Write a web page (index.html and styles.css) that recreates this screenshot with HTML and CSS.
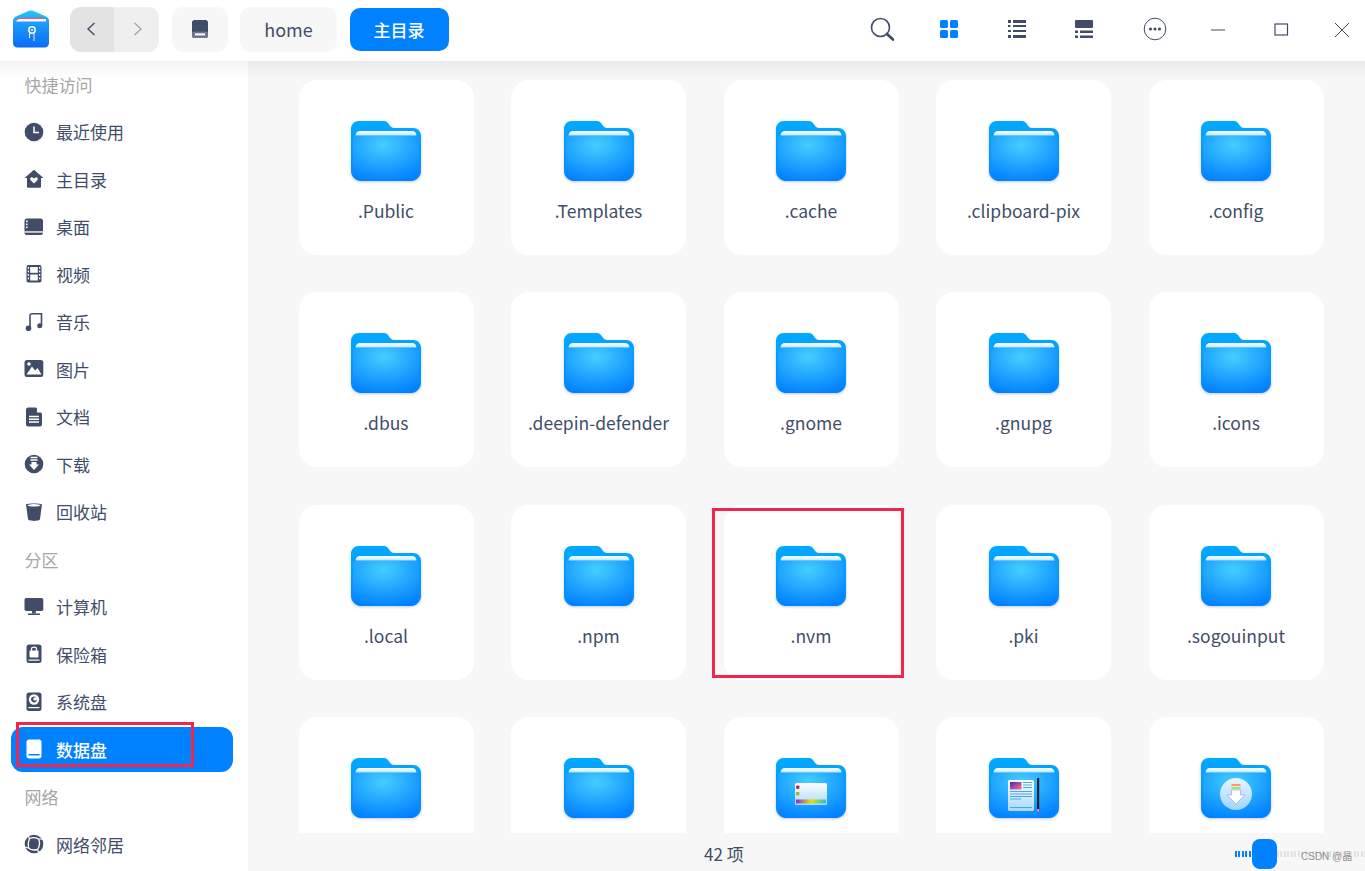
FILE: index.html
```html
<!DOCTYPE html>
<html lang="zh-CN">
<head>
<meta charset="utf-8">
<title>文件管理器</title>
<link rel="stylesheet" href="styles.css">
</head>
<body>
<svg class="defs" aria-hidden="true">
  <defs>
    <radialGradient id="front" cx="0.46" cy="0.2" r="0.85">
      <stop offset="0" stop-color="#45ceff"/>
      <stop offset="0.6" stop-color="#1a9fff"/>
      <stop offset="1" stop-color="#0080ff"/>
    </radialGradient>
    <linearGradient id="back" x1="0" y1="0" x2="0" y2="1">
      <stop offset="0" stop-color="#00aaff"/>
      <stop offset="1" stop-color="#0a86ff"/>
    </linearGradient>
    <linearGradient id="strip" x1="0" y1="0" x2="0" y2="1">
      <stop offset="0" stop-color="#ffffff"/>
      <stop offset="1" stop-color="#bfe9ff"/>
    </linearGradient>
    <linearGradient id="logoBody" x1="0" y1="0" x2="0" y2="1">
      <stop offset="0" stop-color="#22c8f5"/>
      <stop offset="0.4" stop-color="#1c97fb"/>
      <stop offset="1" stop-color="#0a6cf5"/>
    </linearGradient>
    <linearGradient id="rainbow" x1="0" y1="0" x2="1" y2="0">
      <stop offset="0" stop-color="#8a2be2"/>
      <stop offset="0.5" stop-color="#e8e000"/>
      <stop offset="1" stop-color="#20c0d8"/>
    </linearGradient>
    <linearGradient id="paper" x1="0" y1="0" x2="0" y2="1">
      <stop offset="0" stop-color="#ffffff"/>
      <stop offset="1" stop-color="#a9d8ff"/>
    </linearGradient>
    <linearGradient id="disc" x1="0" y1="0" x2="0" y2="1">
      <stop offset="0" stop-color="#e6f5ff"/>
      <stop offset="1" stop-color="#9fd4ff"/>
    </linearGradient>
    <linearGradient id="pic" x1="0" y1="0" x2="1" y2="1">
      <stop offset="0" stop-color="#4a1fd0"/>
      <stop offset="1" stop-color="#ff7a70"/>
    </linearGradient>
    <symbol id="folder" viewBox="0 0 70 62">
      <path d="M8 0H32C35.500 0 36.500 1.500 38 3.500C39.500 5.700 40.500 7 43 7H62C66.500 7 70 10.500 70 15V50C70 55.500 65.500 60 60 60H10C4.500 60 0 55.500 0 50V8C0 3.500 3.500 0 8 0Z" fill="url(#back)"/>
      <path d="M2 15H68V50C68 54.500 64.500 60 59 60H11C5.500 60 2 54.500 2 50Z" fill="url(#front)"/>
      <path d="M4.500 14.500C4.500 11.800 6.500 10 9 10H61C63.500 10 65.500 11.800 65.500 14.500Z" fill="url(#strip)"/>
    </symbol>
  </defs>
</svg>

<header class="titlebar">
  <div class="tb-left">
    <svg class="logo" viewBox="0 0 36 38">
      <path d="M16 .8Q18 0 20 .8L33 6.500Q36 8 36 11V33C36 35.500 34 37.500 31.500 37.500H4.500C2 37.500 0 35.500 0 33V11Q0 8 3 6.500Z" fill="url(#logoBody)"/>
      <path d="M3 11.500Q3 8.500 6 8L30 7.600V9H6Z" fill="#ff4d6a"/>
      <path d="M3 11.500Q4 9 6.500 9H33V11.500Z" fill="#f3fbff"/>
      <circle cx="19" cy="20" r="3.200" fill="none" stroke="#fff" stroke-width="1.500"/>
      <circle cx="19" cy="20" r=".9" fill="#fff"/>
      <path d="M21 23V31" stroke="#dff2ff" stroke-width="1"/>
      <path d="M16.500 23V28" stroke="#dff2ff" stroke-width="1"/>
    </svg>
    <div class="nav-group">
      <div class="nav-back">
        <svg class="ic14" viewBox="0 0 14 14"><path d="M9.500 1L3 7L9.500 13" fill="none" stroke="#414d68" stroke-width="1.400"/></svg>
      </div>
      <div class="nav-fwd">
        <svg class="ic14" viewBox="0 0 14 14"><path d="M4.500 1L11 7L4.500 13" fill="none" stroke="#a4a8b4" stroke-width="1.400"/></svg>
      </div>
    </div>
    <div class="crumb crumb-disk">
      <svg class="ic18" viewBox="0 0 16 18">
        <path d="M2.500 0H13.500C14.900 0 16 1.100 16 2.500V15.500C16 16.900 14.900 18 13.500 18H2.500C1.100 18 0 16.900 0 15.500V2.500C0 1.100 1.100 0 2.500 0Z" fill="#414d68"/>
        <rect y="11.500" width="16" height="6.500" rx="2" fill="#6e7890"/>
        <rect x="3" y="13.400" width="10" height="2" fill="#fff"/>
      </svg>
    </div>
    <div class="crumb crumb-home">home</div>
    <div class="crumb-current">主目录</div>
  </div>
  <div class="tb-right">
    <svg class="tool" viewBox="0 0 24 24"><circle cx="10.500" cy="10.500" r="9" fill="none" stroke="#414d68" stroke-width="1.600"/><path d="M17 17L23 22.500" stroke="#414d68" stroke-width="2.800" stroke-linecap="round"/></svg>
    <svg class="tool" viewBox="0 0 24 24"><rect x="3" y="3" width="8" height="8" rx="1.500" fill="#0081ff"/><rect x="13" y="3" width="8" height="8" rx="1.500" fill="#0081ff"/><rect x="3" y="13" width="8" height="8" rx="1.500" fill="#0081ff"/><rect x="13" y="13" width="8" height="8" rx="1.500" fill="#0081ff"/></svg>
    <svg class="tool" viewBox="0 0 24 24" fill="#414d68"><rect x="3" y="3" width="3" height="3"/><rect x="8" y="3" width="13" height="3"/><rect x="3" y="8" width="2.500" height="2"/><rect x="8" y="8" width="13" height="2"/><rect x="3" y="13" width="3" height="2"/><rect x="8" y="13" width="13" height="2"/><rect x="3" y="18" width="3" height="3"/><rect x="8" y="18" width="13" height="3"/></svg>
    <svg class="tool" viewBox="0 0 24 24" fill="#414d68"><rect x="3" y="3" width="18" height="8" rx="1"/><rect x="3" y="13.500" width="3" height="2.500"/><rect x="8" y="13.500" width="13" height="2.500"/><rect x="3" y="18.500" width="3" height="2.500"/><rect x="8" y="18.500" width="13" height="2.500"/></svg>
    <svg class="tool" viewBox="0 0 24 24"><circle cx="12" cy="12" r="10.800" fill="none" stroke="#414d68" stroke-width="1"/><circle cx="7.500" cy="12" r="1.600" fill="#414d68"/><circle cx="12" cy="12" r="1.600" fill="#414d68"/><circle cx="16.500" cy="12" r="1.600" fill="#414d68"/></svg>
    <svg class="tool" viewBox="0 0 24 24"><path d="M5 13H19" stroke="#414d68" stroke-width="1"/></svg>
    <svg class="tool" viewBox="0 0 24 24"><rect x="6" y="7" width="12.500" height="11" fill="none" stroke="#414d68" stroke-width="1.200"/></svg>
    <svg class="tool" viewBox="0 0 24 24"><path d="M5 6L19 20M19 6L5 20" stroke="#414d68" stroke-width="1"/></svg>
  </div>
</header>

<div class="body-row">
  <nav class="sidebar">
    <div class="side-label">快捷访问</div>
    <div class="side-row"><svg class="side-ic" viewBox="0 0 20 20"><circle cx="10" cy="10" r="9.300"/><path d="M10 4.500V10.500H15" fill="none" stroke="#fff" stroke-width="1.500"/></svg><span>最近使用</span></div>
    <div class="side-row"><svg class="side-ic" viewBox="0 0 20 20"><path d="M10 .7L19.500 9H17V17.500C17 18.300 16.500 18.800 15.700 18.800H4.300C3.500 18.800 3 18.300 3 17.500V9H.5Z"/><path d="M10 14.500L6.500 11C5.500 9.800 6.800 7.800 8.500 8.500L10 9.500L11.500 8.500C13.200 7.800 14.500 9.800 13.500 11Z" fill="#fff"/></svg><span>主目录</span></div>
    <div class="side-row"><svg class="side-ic" viewBox="0 0 20 20"><rect x=".5" y="1.500" width="18.500" height="16.500" rx="2.500"/><rect x=".5" y="14.300" width="18.500" height="1.300" fill="#fff"/><rect x="2" y="3.500" width="1.600" height="1.600" fill="#fff"/><rect x="2" y="6.500" width="1.600" height="1.600" fill="#fff"/><rect x="2" y="9.500" width="1.600" height="1.600" fill="#fff"/></svg><span>桌面</span></div>
    <div class="side-row"><svg class="side-ic" viewBox="0 0 20 20"><rect x="2.500" y="1" width="15" height="17.500" rx="2"/><rect x="6.200" y="3" width="7.600" height="5.800" fill="#fff"/><rect x="6.200" y="10.500" width="7.600" height="6" fill="#fff"/><g fill="#fff"><rect x="3.700" y="3" width="1.300" height="1.800"/><rect x="3.700" y="6.500" width="1.300" height="1.800"/><rect x="3.700" y="10" width="1.300" height="1.800"/><rect x="3.700" y="13.500" width="1.300" height="1.800"/><rect x="15" y="3" width="1.300" height="1.800"/><rect x="15" y="6.500" width="1.300" height="1.800"/><rect x="15" y="10" width="1.300" height="1.800"/><rect x="15" y="13.500" width="1.300" height="1.800"/></g></svg><span>视频</span></div>
    <div class="side-row"><svg class="side-ic" viewBox="0 0 20 20"><path d="M6 16.500V3.500C6 2.500 6.600 1.800 7.600 1.800H17.500V14" fill="none" stroke="#414d68" stroke-width="1.600"/><circle cx="4.500" cy="16.300" r="2.800"/><circle cx="15.700" cy="13.800" r="2.500"/></svg><span>音乐</span></div>
    <div class="side-row"><svg class="side-ic" viewBox="0 0 20 20"><rect x=".5" y="1" width="18.800" height="17" rx="2.500"/><path d="M2.500 15.500L8 7.500L11 11.500L13.500 9L17.500 15.500Z" fill="#fff"/><circle cx="5" cy="5" r="1.800" fill="#fff"/></svg><span>图片</span></div>
    <div class="side-row"><svg class="side-ic" viewBox="0 0 20 20"><path d="M4 .5H12L18 6.500V17.500C18 18.800 17 19.500 16 19.500H4C3 19.500 2 18.800 2 17.500V2.500C2 1.200 3 .5 4 .5Z"/><path d="M13 .5L18 5.500H13Z" fill="#fff"/><path d="M5 9.500H15M5 12.300H15M5 15H15" stroke="#fff" stroke-width="1.400"/></svg><span>文档</span></div>
    <div class="side-row"><svg class="side-ic" viewBox="0 0 20 20"><circle cx="10" cy="10" r="9.300"/><path d="M6.500 3.500H13.500M6.500 6H13.500" stroke="#fff" stroke-width="1.300"/><path d="M7.500 8H12.500V10.500H15L10 16L5 10.500H7.500Z" fill="#fff"/></svg><span>下载</span></div>
    <div class="side-row"><svg class="side-ic" viewBox="0 0 20 20"><path d="M2 2.500C2 1 18 1 18 2.500L16 17C15.800 19.500 4.200 19.500 4 17Z"/><ellipse cx="10" cy="3.300" rx="6.500" ry="1.200" fill="#fff"/></svg><span>回收站</span></div>
    <div class="side-label">分区</div>
    <div class="side-row"><svg class="side-ic" viewBox="0 0 20 20"><rect x=".5" y="1" width="18.800" height="13" rx="1.800"/><rect x="8" y="14" width="3.800" height="2.500"/><rect x="4" y="16.500" width="12" height="1.500"/></svg><span>计算机</span></div>
    <div class="side-row"><svg class="side-ic" viewBox="0 0 20 20"><rect x="2.500" y=".5" width="15" height="18.500" rx="2.500"/><rect x="5.500" y="6.500" width="9" height="7" rx="1" fill="#fff"/><path d="M7.500 7V5C7.500 2.500 12.500 2.500 12.500 5V7" fill="none" stroke="#fff" stroke-width="1.200"/><rect x="4.500" y="15.500" width="11" height="1.200" fill="#fff"/></svg><span>保险箱</span></div>
    <div class="side-row"><svg class="side-ic" viewBox="0 0 20 20"><rect x="2.500" y=".5" width="15" height="18.500" rx="2.500"/><circle cx="10" cy="7.500" r="5.200" fill="#fff"/><path d="M7 7C7 4.500 11 3.700 12.500 5.500C10.500 5 9 6 9.500 7.500C10 9 12 9 13 7.500C13 10 10.500 11 9 10.200C7.800 9.500 7 8.500 7 7Z"/><rect x="4.500" y="15" width="11" height="1.200" fill="#fff"/></svg><span>系统盘</span></div>
    <div class="side-row side-active"><svg class="side-ic side-ic-white" viewBox="0 0 20 20"><path d="M5 .5H15C16.400 .5 17.500 1.600 17.500 3V17C17.500 18.400 16.400 19.500 15 19.500H5C3.600 19.500 2.500 18.400 2.500 17V3C2.500 1.600 3.600 .5 5 .5Z"/><rect x="4.500" y="15" width="11" height="1.500" fill="#0081ff"/></svg><span>数据盘</span></div>
    <div class="side-label">网络</div>
    <div class="side-row"><svg class="side-ic" viewBox="0 0 20 20"><circle cx="10" cy="10" r="9.300"/><path d="M5.500 4.500Q10 2.500 14.500 5Q17 10.500 13.500 15.500Q8 17 4.500 14Q3.500 9 5.500 4.500Z" stroke="#fff" stroke-width="1.300"/><path d="M5.500 4.500L4 1.500M14.500 5L18.500 5M13.500 15.500L15 19M4.500 14L.5 13" fill="none" stroke="#fff" stroke-width="1.200"/></svg><span>网络邻居</span></div>
  </nav>

  <div class="right-pane">
    <main class="content">
      <div class="grid">
        <div class="card"><svg class="folder"><use href="#folder"/></svg><div class="name">.Public</div></div>
        <div class="card"><svg class="folder"><use href="#folder"/></svg><div class="name">.Templates</div></div>
        <div class="card"><svg class="folder"><use href="#folder"/></svg><div class="name">.cache</div></div>
        <div class="card"><svg class="folder"><use href="#folder"/></svg><div class="name">.clipboard-pix</div></div>
        <div class="card"><svg class="folder"><use href="#folder"/></svg><div class="name">.config</div></div>
        <div class="card"><svg class="folder"><use href="#folder"/></svg><div class="name">.dbus</div></div>
        <div class="card"><svg class="folder"><use href="#folder"/></svg><div class="name">.deepin-defender</div></div>
        <div class="card"><svg class="folder"><use href="#folder"/></svg><div class="name">.gnome</div></div>
        <div class="card"><svg class="folder"><use href="#folder"/></svg><div class="name">.gnupg</div></div>
        <div class="card"><svg class="folder"><use href="#folder"/></svg><div class="name">.icons</div></div>
        <div class="card"><svg class="folder"><use href="#folder"/></svg><div class="name">.local</div></div>
        <div class="card"><svg class="folder"><use href="#folder"/></svg><div class="name">.npm</div></div>
        <div class="card"><svg class="folder"><use href="#folder"/></svg><div class="name">.nvm</div></div>
        <div class="card"><svg class="folder"><use href="#folder"/></svg><div class="name">.pki</div></div>
        <div class="card"><svg class="folder"><use href="#folder"/></svg><div class="name">.sogouinput</div></div>
        <div class="card"><svg class="folder"><use href="#folder"/></svg></div>
        <div class="card"><svg class="folder"><use href="#folder"/></svg></div>
        <div class="card">
          <svg class="folder" viewBox="0 0 70 62">
            <use href="#folder" width="70" height="62"/>
            <rect x="19" y="25" width="32" height="22" rx="1.500" fill="url(#paper)"/>
            <rect x="20" y="41.500" width="30" height="4" fill="url(#rainbow)"/>
            <rect x="20" y="27.500" width="3.400" height="3.400" rx=".8" fill="#d8203a"/>
            <rect x="20" y="34" width="3.400" height="3.400" rx=".8" fill="#88c030"/>
          </svg>
        </div>
        <div class="card">
          <svg class="folder" viewBox="0 0 70 62">
            <use href="#folder" width="70" height="62"/>
            <rect x="19" y="22" width="26" height="31" rx="1.500" fill="url(#paper)"/>
            <rect x="21" y="24" width="11.500" height="7.500" fill="url(#pic)"/>
            <path d="M34 24.500H43M34 27H43M34 29.500H43M21 33.500H43M21 36H43M21 38.500H43M21 41H32M21 49.500H43" stroke="#4aa6ea" stroke-width="1"/>
            <rect x="48" y="20" width="2.200" height="33" fill="#1a2230"/>
            <rect x="48" y="51" width="2.200" height="2.500" fill="#ff7a90"/>
          </svg>
        </div>
        <div class="card">
          <svg class="folder" viewBox="0 0 70 62">
            <use href="#folder" width="70" height="62"/>
            <circle cx="35" cy="36" r="16" fill="url(#disc)"/>
            <rect x="30.500" y="26" width="9" height="2" fill="#ff9a70"/>
            <rect x="30.500" y="29" width="9" height="2" fill="#a8e070"/>
            <path d="M30.500 32H39.500V37H44L35 46L26 37H30.500Z" fill="#fff" stroke="#a78ff0" stroke-width=".6"/>
          </svg>
        </div>
      </div>
    </main>
    <footer class="statusbar">
      <div class="status-text">42 项</div>
      <div class="slider">
        <div class="track-on"></div>
        <div class="thumb"></div>
        <div class="track-off"></div>
      </div>
    </footer>
  </div>
</div>

<div class="mark mark-side"></div>
<div class="mark mark-folder"></div>
<div class="watermark">CSDN @晶</div>
</body>
</html>
```

FILE: styles.css
```css
* { box-sizing: border-box; }

html, body {
  margin: 0;
  height: 871px;
  overflow: hidden;
}

body {
  position: relative;
  display: flex;
  flex-direction: column;
  width: 1365px;
  background: #f7f7f7;
  color: #414d68;
  font-family: "Noto Sans CJK SC", "Noto Sans", sans-serif;
  font-size: 17px;
}

.defs { position: absolute; width: 0; height: 0; }

/* title bar */
.titlebar {
  flex: none;
  height: 61px;
  display: flex;
  justify-content: space-between;
  background: #fff;
  position: relative;
  z-index: 2;
}

.tb-left {
  display: flex;
  align-items: flex-start;
  padding: 7px 0 0 13px;
}

.logo { width: 36px; height: 38px; margin: 3px 21px 0 0; }

.nav-group {
  display: flex;
  width: 89px;
  height: 44.500px;
  border-radius: 11px;
  overflow: hidden;
  margin-right: 13px;
}

.nav-back, .nav-fwd {
  display: flex;
  align-items: center;
  justify-content: center;
}
.nav-back { width: 44px; background: #e3e3e3; }
.nav-fwd { width: 45px; background: #efefef; }

.ic14 { width: 14px; height: 14px; }
.ic18 { width: 16px; height: 18px; }

.crumb {
  display: flex;
  align-items: center;
  justify-content: center;
  height: 44.500px;
  background: #f7f7f7;
  border-radius: 11px;
}
.crumb-disk { width: 56px; margin-right: 12px; }
.crumb-home { width: 97px; margin-right: 13px; font-size: 18px; }

.crumb-current {
  display: flex;
  align-items: center;
  justify-content: center;
  width: 99px;
  height: 42.500px;
  margin-top: 1px;
  padding-right: 1px;
  background: #0081ff;
  border-radius: 10px;
  color: #fff;
  font-size: 17px;
  font-weight: 500;
}

.tb-right {
  width: 495px;
  display: grid;
  grid-template-columns: 67px 68px 67px 71px 63px 63px 61px 35px;
  align-items: start;
  padding-top: 17px;
}

.tool { width: 24px; height: 24px; }

/* body */
.body-row {
  flex: 1;
  min-height: 0;
  display: flex;
  position: relative;
}

.body-row::before {
  content: "";
  position: absolute;
  left: 0;
  right: 0;
  top: 0;
  height: 18px;
  background: linear-gradient(rgba(0, 0, 0, .05), rgba(0, 0, 0, 0));
  z-index: 1;
}

.sidebar {
  flex: none;
  width: 248px;
  background: #fff;
  padding: 0 15px 0 10.500px;
  display: flex;
  flex-direction: column;
}

.side-label {
  flex: none;
  height: 47.500px;
  display: flex;
  align-items: center;
  padding-left: 14px;
  padding-bottom: 1px;
  color: #a6a6a6;
  line-height: 1;
}

.side-row {
  flex: none;
  height: 47.500px;
  display: flex;
  align-items: center;
  gap: 12.500px;
  padding-left: 13px;
  padding-bottom: 1px;
  line-height: 1;
}

.side-active {
  height: 45px;
  margin: 1.250px 0;
  background: #0081ff;
  border-radius: 12px;
  color: #fff;
  font-weight: 500;
}

.side-ic { flex: none; width: 20px; height: 20px; fill: #414d68; }
.side-ic-white { fill: #fff; }

/* right pane */
.right-pane {
  flex: 1;
  min-width: 0;
  display: flex;
  flex-direction: column;
}

.content {
  flex: 1;
  min-height: 0;
  overflow: hidden;
  padding: 18.500px 0 0 50.500px;
}

.grid {
  display: grid;
  grid-template-columns: repeat(5, 175px);
  grid-auto-rows: 175px;
  column-gap: 37.500px;
  row-gap: 37.500px;
}

.card {
  background: #fff;
  border-radius: 18px;
  display: flex;
  flex-direction: column;
  align-items: center;
  padding-top: 41px;
}

.folder {
  width: 70px;
  height: 62px;
  flex: none;
  filter: drop-shadow(0 1px 1.500px rgba(0, 60, 120, .25));
}

.name {
  margin-top: 15px;
  line-height: 26px;
  white-space: nowrap;
  font-size: 17.500px;
}

/* status bar */
.statusbar {
  flex: none;
  height: 38px;
  display: flex;
  align-items: center;
  justify-content: space-between;
  position: relative;
  z-index: 2;
  background: #f7f7f7;
}

.status-text { margin-left: 456px; padding-top: 3px; }

.slider {
  width: 130px;
  display: flex;
  align-items: center;
  padding-top: 4px;
}

.track-on {
  width: 17px;
  height: 6px;
  background: repeating-linear-gradient(90deg, #0081ff 0 2px, transparent 2px 3.500px);
}

.thumb {
  width: 25px;
  height: 30px;
  background: #0081ff;
  border-radius: 8px;
}

.track-off {
  flex: 1;
  height: 6px;
  background: repeating-linear-gradient(90deg, #e2e2e2 0 2px, transparent 2px 3.500px);
}

/* annotations drawn over the screenshot */
.mark {
  position: absolute;
  border: 3px solid #f0264f;
  z-index: 3;
}
.mark-side { left: 16px; top: 722px; width: 178px; height: 45px; }
.mark-folder { left: 712px; top: 508px; width: 192px; height: 170px; }

.watermark {
  position: absolute;
  left: 1301px;
  top: 850px;
  font-size: 10px;
  line-height: 14px;
  color: #8f8f8f;
  font-family: "Liberation Sans", "Noto Sans CJK SC", sans-serif;
  z-index: 3;
}
```
